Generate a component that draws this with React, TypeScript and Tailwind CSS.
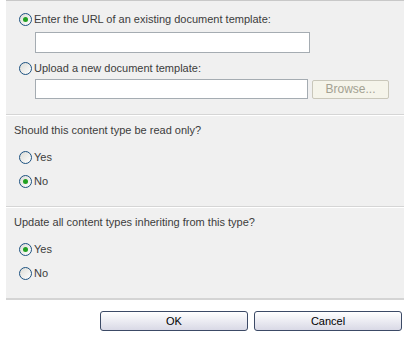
function Radio({ checked }: { checked?: boolean }) {
  return (
    <span className="flex h-[13px] w-[13px] shrink-0 items-center justify-center rounded-full border border-[#1c5180] bg-gradient-to-br from-[#dcdcd6] to-white">
      {checked && <span className="h-[5px] w-[5px] rounded-full bg-[#21a121]" />}
    </span>
  );
}

function Option({ label, checked }: { label: string; checked?: boolean }) {
  return (
    <label className="flex h-[14px] items-center gap-[2px]">
      <Radio checked={checked} />
      <span>{label}</span>
    </label>
  );
}

function Separator() {
  return <div className="h-[2px] border-t border-[#d5d5d5] bg-white" />;
}

export default function App() {
  return (
    <div
      className="h-[346px] w-[414px] overflow-hidden bg-white text-[11px] leading-[14px] text-[#3c3c3c]"
      style={{ fontFamily: '"Liberation Sans", Arial, sans-serif' }}
    >
      <div className="ml-[6px] w-[398px] border-t border-[#c8c8c8] bg-[#f0f0f0]">
        <div className="flex flex-col pb-[15px] pl-[13px] pt-[11px]">
          <Option label="Enter the URL of an existing document template:" checked />
          <div className="ml-[16px] mt-[6px] h-[21px] w-[275px] border border-[#a5acb2] bg-white" />
          <div className="mt-[8px]">
            <Option label="Upload a new document template:" />
          </div>
          <div className="ml-[16px] mt-[4px] flex items-center gap-[4px]">
            <div className="h-[20px] w-[273px] border border-[#a5acb2] bg-white" />
            <button className="h-[19px] w-[77px] rounded-[2px] border border-[#c9c7ba] bg-[#f5f4ea] text-[12px] text-[#a3a192]">
              Browse...
            </button>
          </div>
        </div>
        <Separator />
        <div className="flex flex-col pb-[18px] pl-[8px] pt-[7px]">
          <div>Should this content type be read only?</div>
          <div className="mt-[13px] flex flex-col gap-[10px] pl-[5px]">
            <Option label="Yes" />
            <Option label="No" checked />
          </div>
        </div>
        <Separator />
        <div className="flex flex-col pb-[18px] pl-[8px] pt-[7px]">
          <div>Update all content types inheriting from this type?</div>
          <div className="mt-[13px] flex flex-col gap-[10px] pl-[5px]">
            <Option label="Yes" checked />
            <Option label="No" />
          </div>
        </div>
      </div>
      <div className="ml-[6px] w-[398px] border-t-2 border-[#d4d4d4]" />
      <div className="mt-[11px] flex justify-end gap-[6px] pr-[12px]">
        {['OK', 'Cancel'].map((b) => (
          <button
            key={b}
            className="h-[20px] w-[148px] rounded-[3px] border border-[#3c4a66] bg-gradient-to-b from-white to-[#d9d9e6] text-[11px] text-black"
          >
            {b}
          </button>
        ))}
      </div>
    </div>
  );
}
